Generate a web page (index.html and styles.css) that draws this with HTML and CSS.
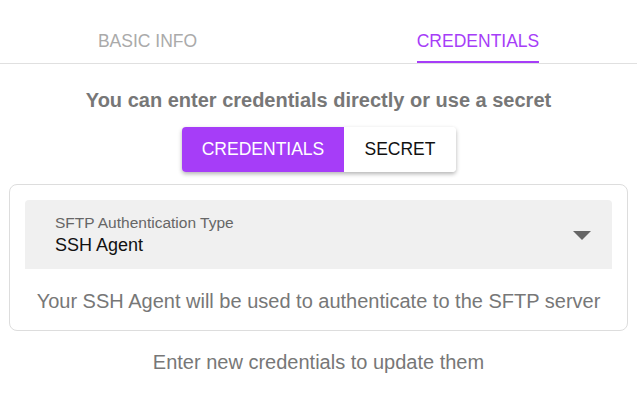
FILE: index.html
```html
<!DOCTYPE html>
<html lang="en">
<head>
  <meta charset="UTF-8" />
  <title>SFTP Credentials</title>
  <link rel="stylesheet" href="styles.css">
</head>
<body>
  <div class="tabs">
    <div class="tab tab-basic">BASIC INFO</div>
    <div class="tab tab-active"><span>CREDENTIALS</span></div>
  </div>

  <h2 class="intro">You can enter credentials directly or use a secret</h2>

  <div class="toggle">
    <button class="toggle-btn selected">CREDENTIALS</button>
    <button class="toggle-btn">SECRET</button>
  </div>

  <div class="card">
    <div class="select-field">
      <div class="select-text">
        <div class="select-label">SFTP Authentication Type</div>
        <div class="select-value">SSH Agent</div>
      </div>
      <svg class="select-arrow" width="18" height="9" viewBox="0 0 18 9">
        <path d="M0 0 L18 0 L9 9 Z" fill="#666"/>
      </svg>
    </div>
    <p class="helper">Your SSH Agent will be used to authenticate to the SFTP server</p>
  </div>

  <p class="footer-note">Enter new credentials to update them</p>
</body>
</html>
```

FILE: styles.css
```css
* {
  box-sizing: border-box;
}
body {
  font-family: Arial, "Liberation Sans", sans-serif;
  margin: 0;
  padding: 0;
  background: #fff;
}
.tabs {
  display: flex;
  border-bottom: 1px solid #e0e0e0;
  height: 64px;
}
.tab {
  display: flex;
  justify-content: center;
  font-size: 17.5px;
  color: #aaa;
  padding-top: 31px;
}
.tab-basic {
  width: 295px;
}
.tab-active {
  flex: 1;
  padding-left: 24px;
}
.tab-active span {
  color: #a63df8;
  border-bottom: 2px solid #a63df8;
  height: 32px;
}
.intro {
  margin: 25px 0 0;
  text-align: center;
  font-size: 20px;
  font-weight: bold;
  color: #777;
}
.toggle {
  display: flex;
  width: 274px;
  height: 45px;
  margin: 15px 0 0 182px;
  border-radius: 4px;
  overflow: hidden;
  box-shadow: 0 2px 4px rgba(0, 0, 0, 0.3);
}
.toggle-btn {
  border: none;
  background: #fff;
  color: #111;
  font-family: inherit;
  font-size: 17.5px;
  padding: 0;
  height: 45px;
}
.toggle-btn:last-child {
  flex: 1;
}
.toggle-btn.selected {
  background: #a63df8;
  color: #fff;
  width: 162px;
}
.card {
  margin: 12px 9px 0;
  border: 1px solid #ddd;
  border-radius: 8px;
  padding: 15px 15px 0;
  height: 147px;
}
.select-field {
  display: flex;
  align-items: center;
  background: #f0f0f0;
  border-radius: 4px 4px 0 0;
  height: 69px;
  padding: 0 21px 0 30px;
}
.select-text {
  flex: 1;
}
.select-label {
  font-size: 15.5px;
  color: #666;
}
.select-value {
  font-size: 18px;
  color: #111;
  margin-top: 3px;
}
.select-arrow {
  margin-top: 1px;
}
.helper {
  margin: 21px 0 0;
  text-align: center;
  font-size: 20px;
  color: #777;
}
.footer-note {
  margin: 20px 0 0;
  text-align: center;
  font-size: 20px;
  color: #777;
}
```
